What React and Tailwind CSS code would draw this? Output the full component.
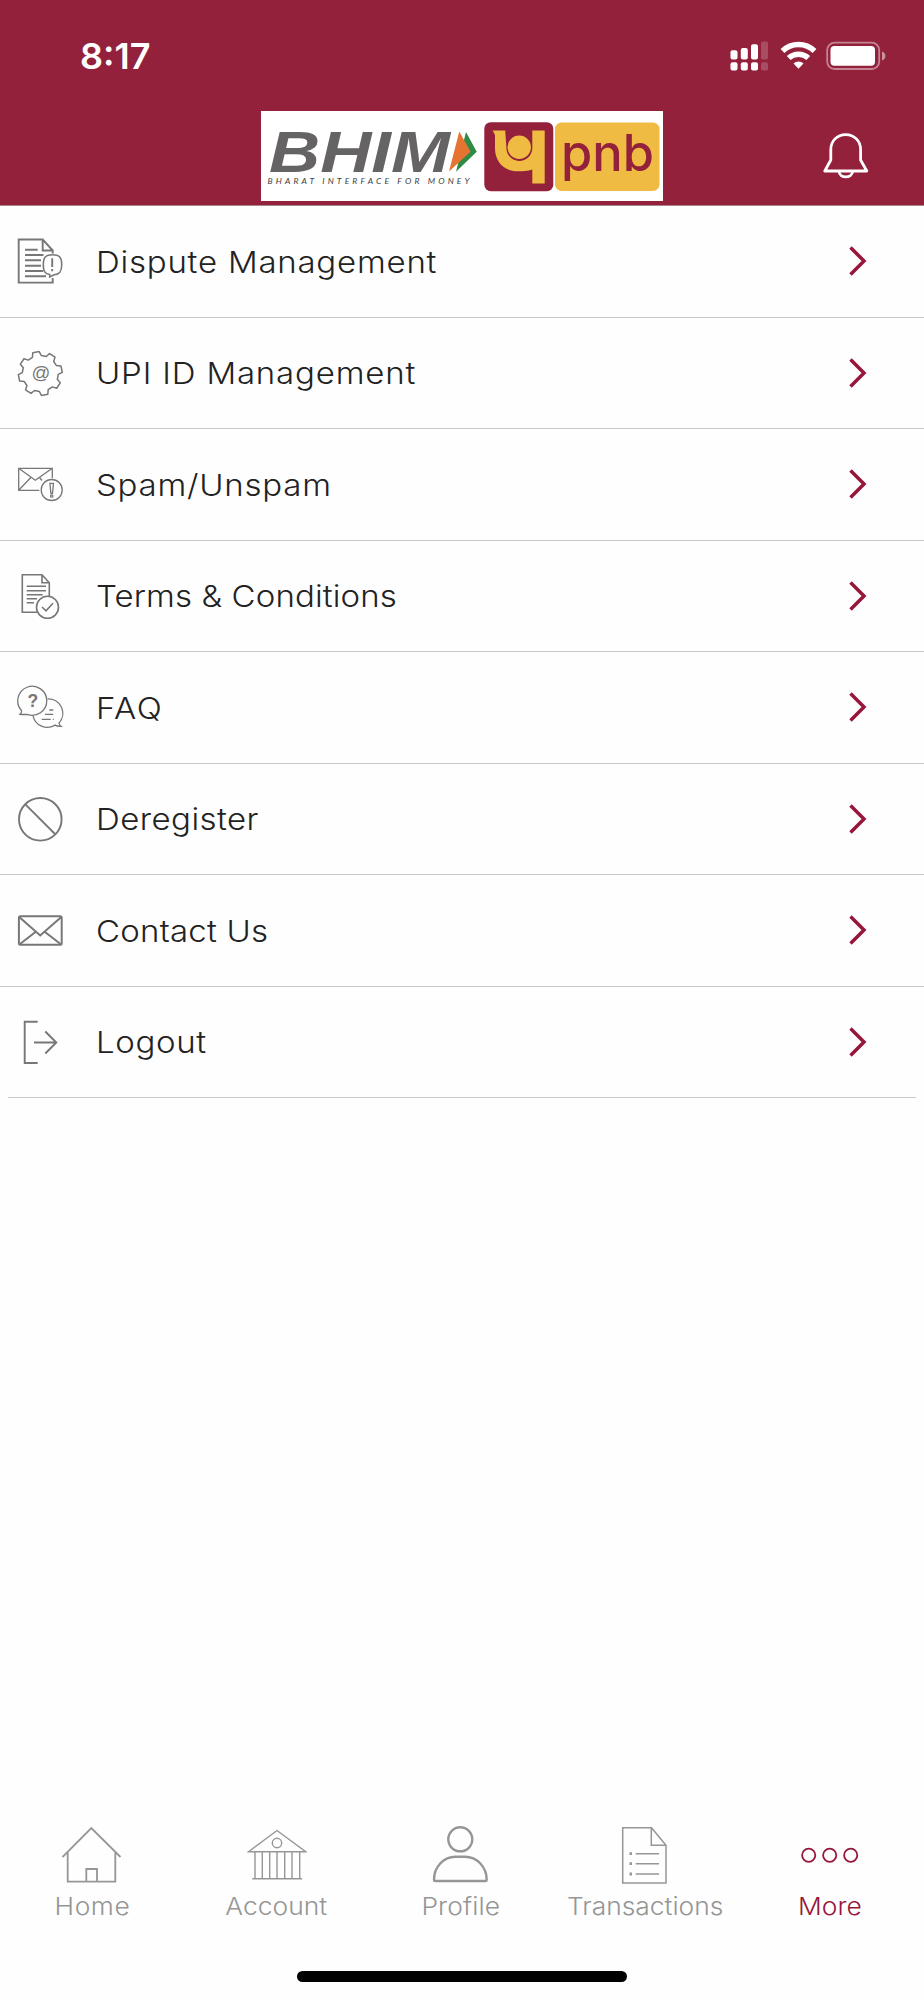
const menuItems = [
  { title: "Dispute Management", icon: DisputeIcon, tracking: "tracking-[0.7px]" },
  { title: "UPI ID Management", icon: GearIcon, tracking: "tracking-[0.75px]" },
  { title: "Spam/Unspam", icon: SpamIcon, tracking: "tracking-[0.7px]" },
  { title: "Terms & Conditions", icon: TermsIcon, tracking: "tracking-[0.1px]" },
  { title: "FAQ", icon: FaqIcon, tracking: "tracking-[1.4px]" },
  { title: "Deregister", icon: DeregisterIcon, tracking: "tracking-[0.4px]" },
  { title: "Contact Us", icon: ContactIcon, tracking: "tracking-[0.2px]" },
  { title: "Logout", icon: LogoutIcon, tracking: "tracking-[0.6px]" },
];

const tabs = [
  { title: "Home", icon: HomeIcon, tracking: "tracking-[0.5px]" },
  { title: "Account", icon: AccountIcon, tracking: "tracking-[0px]" },
  { title: "Profile", icon: ProfileIcon, tracking: "tracking-[0.1px]" },
  { title: "Transactions", icon: TransactionsIcon, tracking: "tracking-[0px]" },
  { title: "More", icon: MoreIcon, tracking: "tracking-[0px]", active: true },
];

function ListSvg({ width = 1.5, children }) {
  return (
    <svg className="h-12 w-12 shrink-0" viewBox="0 0 48 48" fill="none" stroke="#777777" strokeWidth={width}>
      {children}
    </svg>
  );
}

function DisputeIcon() {
  return (
    <ListSvg width={1.9}>
      <path d="M36.7 41v4.6h-34V2.5h24l10 11M26.7 2.5v11h10v3" />
      <path d="M9 12.7h12.7M9 18h18.5M9 23.3h16M9 28.7h16M9 34h18M9 39.3h21" />
      <path
        d="M36.5 17.7c6.5 0 9.2 2.2 9.2 10s-2.7 9.8-7.5 10L33.7 40v-2.5c-4.8-.6-6.4-3-6.4-9.8 0-7.8 2.7-10 9.2-10Z"
        fill="#fefefe"
        strokeWidth="1.6"
      />
      <path d="M36.2 21.3V30M36.2 32v2.2" />
    </ListSvg>
  );
}

// eight teeth, the first one a little left of twelve o'clock
const gearPoints = Array.from({ length: 8 }, (_, i) => {
  const base = i * 45 - 101;
  return [
    [22, base - 9],
    [22, base + 8],
    [18, base + 14],
    [18, base + 30],
  ].map(([r, deg]) => {
    const a = (deg * Math.PI) / 180;
    return `${(24.3 + r * Math.cos(a)).toFixed(2)},${(24.5 + r * Math.sin(a)).toFixed(2)}`;
  });
})
  .flat()
  .join(" ");

function GearIcon() {
  return (
    <ListSvg>
      <polygon points={gearPoints} strokeLinejoin="round" />
      <text
        x="25"
        y="29.8"
        textAnchor="middle"
        fontSize="18.5"
        fill="#777777"
        stroke="none"
        className="font-['Liberation_Sans']"
      >
        @
      </text>
    </ListSvg>
  );
}

function SpamIcon() {
  return (
    <ListSvg width={1.3}>
      <path d="M23.3 30.3H2.7v-22h33.6v10M2.7 8.3l16.6 12 17-12M2.7 30.3 15.3 17M23.5 17.5l2.5 3" />
      <circle cx="35.7" cy="30" r="10.5" />
      <path d="M33.9 23.3h3.6l-1 10h-1.6Z" />
      <circle cx="35.7" cy="36" r="1.2" />
    </ListSvg>
  );
}

function TermsIcon() {
  return (
    <ListSvg width={1.6}>
      <path d="M21.7 40.2H6.3V2.8H26l7.3 8V24M26 2.8v8h7.3" />
      <path d="M10.7 14.2H30M10.7 18.8H30M10.7 22.8h16M10.7 26.8H21M10.7 30.8H18" />
      <circle cx="31.5" cy="35.3" r="11" />
      <path d="m26 35 4 3.8 7-7.6" />
    </ListSvg>
  );
}

function FaqIcon() {
  return (
    <ListSvg width={1.3}>
      <path d="M5.5 27.5a14.5 14.5 0 1 1 5.500 3.800c-2 .2-4.500.3-7 0 1.200-1 1.700-2.300 1.500-3.800Z" />
      <path d="M31.500 15.800a14.500 14.500 0 0 1 11.500 24.200c.2 1.500.7 2.500 2 3.300-2.500.1-4.500-.3-6-1.200a14.500 14.500 0 0 1-22-9.500" />
      <path d="M33.300 27h4M29 31.300h8.300M25.700 36.300h9M36.800 36.300h1" />
      <text
        x="16.8"
        y="24.2"
        textAnchor="middle"
        fontSize="17.5"
        fill="#777777"
        stroke="none"
        className="font-['Liberation_Sans'] font-bold"
      >
        ?
      </text>
    </ListSvg>
  );
}

function DeregisterIcon() {
  return (
    <ListSvg width={1.9}>
      <circle cx="24.3" cy="24.3" r="21.3" />
      <path d="m9.4 9.4 29.6 29.6" />
    </ListSvg>
  );
}

function ContactIcon() {
  return (
    <ListSvg width={2}>
      <rect x="2.9" y="10.3" width="42.800" height="28.500" rx="1.5" />
      <path d="m3.500 11.200 20.700 18.300L45 11.200M4 38l15.500-12M44.500 38 29 26" />
    </ListSvg>
  );
}

function LogoutIcon() {
  return (
    <ListSvg width={1.9}>
      <path d="M21.7 3.700h-13v41.300h13M18 24.500h22M29.300 13.500l11 11-11 11" />
    </ListSvg>
  );
}

function TabSvg({ width = 1.800, children }) {
  return (
    <svg className="h-15 w-15" viewBox="0 0 60 60" fill="none" stroke="currentColor" strokeWidth={width}>
      {children}
    </svg>
  );
}

function HomeIcon() {
  return (
    <TabSvg>
      <path d="M.5 32 29.300 3l29.200 29M5.700 27v29.700h47.600V27M24.300 56.700V44H35v12.700" />
    </TabSvg>
  );
}

function AccountIcon() {
  return (
    <TabSvg width={1.400}>
      <path d="M1.500 26.700 30 5.500l28.700 21.200ZM5.300 53.700H55" />
      <path d="M8 27v26.500M15.300 27v26.500M22.700 27v26.500M30 27v26.500M37.700 27v26.500M45 27v26.500M52.700 27v26.500" />
      <circle cx="30" cy="18" r="4.700" />
    </TabSvg>
  );
}

function ProfileIcon() {
  return (
    <TabSvg width={2.400}>
      <circle cx="29.300" cy="14.300" r="12" />
      <path d="M24.500 31.700h9.500c12 0 21.700 10.500 21.700 23 0 .8-.4 1.300-1.200 1.300h-50.300c-.8 0-1.200-.5-1.200-1.300 0-12.500 9.500-23 21.500-23Z" />
    </TabSvg>
  );
}

function TransactionsIcon() {
  return (
    <TabSvg width={1.500}>
      <path d="M7.700 2.700h28.800L51 20.300V58H7.700ZM36.300 2.700v17.600H51" />
      <path d="M20.700 28.700H44M20.700 38.700H44M20.700 49H44" />
      <path d="M14.500 28.700H17M14.500 38.700H17M14.500 49H17" strokeWidth="2.800" />
    </TabSvg>
  );
}

function MoreIcon() {
  return (
    <TabSvg>
      <circle cx="8.700" cy="30.300" r="6.600" />
      <circle cx="29.700" cy="30.300" r="6.600" />
      <circle cx="50.700" cy="30.300" r="6.600" />
    </TabSvg>
  );
}

function StatusBar() {
  return (
    <div className="flex h-[111px] items-center justify-between pr-[38px] pl-[80px] text-white">
      <span className="font-['Inter'] text-[36px] font-semibold">8:17</span>
      <div className="flex items-center">
        <svg className="mr-3 h-[30px] w-[38px]" viewBox="0 0 38 30" fill="currentColor">
          <rect x=".5" y="9.300" width="7" height="9.200" rx="2" />
          <rect x="10.800" y="7" width="7" height="11.500" rx="2" />
          <rect x="21" y="3.200" width="7" height="15.300" rx="2" />
          <rect x="31" y=".5" width="7" height="18" rx="2" opacity=".2" />
          <rect x=".5" y="21.300" width="7" height="8.200" rx="2" />
          <rect x="10.800" y="21.300" width="7" height="8.200" rx="2" />
          <rect x="21" y="21.300" width="7" height="8.200" rx="2" />
          <rect x="31" y="21.300" width="7" height="8.200" rx="2" opacity=".2" />
        </svg>
        <svg className="mr-[9px] h-[30px] w-[37px]" viewBox="0 0 37 30" fill="none" stroke="currentColor" strokeWidth="5.500">
          <path d="M2.500 10a23 23 0 0 1 32 0" />
          <path d="M8.700 17a14.500 14.500 0 0 1 19.600 0" />
          <path d="m18.500 27.800-5-5.300a7 7 0 0 1 10 0Z" fill="currentColor" stroke="none" />
        </svg>
        <svg className="h-[30px] w-[60px]" viewBox="0 0 60 30" fill="currentColor">
          <rect x="1.200" y="1.700" width="52" height="26.300" rx="7.500" fill="none" stroke="white" strokeWidth="1.800" opacity=".45" />
          <rect x="4.500" y="5" width="44.500" height="19.800" rx="4" />
          <path d="M56 10.500c4.500 1.500 4.500 7.500 0 9Z" opacity=".5" />
        </svg>
      </div>
    </div>
  );
}

function Logo() {
  return (
    <svg className="h-[90px] w-[402px] bg-white" viewBox="0 0 402 90">
      <text
        x="8"
        y="60.500"
        fontSize="57"
        textLength="181"
        lengthAdjust="spacingAndGlyphs"
        fill="#656364"
        className="font-['Liberation_Sans'] font-bold italic"
      >
        BHIM
      </text>
      <path d="m205 21 10.700 19.700L195 60.700Z" fill="#2f8a45" />
      <path d="M198.300 20.500 209.500 40.700 188 60.500Z" fill="#e57433" />
      <text x="6.500" y="72.500" fontSize="8.500" textLength="202" fill="#3c3c3c" className="font-['Lato'] italic">
        BHARAT INTERFACE FOR MONEY
      </text>
      <rect x="223.300" y="11.200" width="69" height="69" rx="6.500" fill="#93213b" />
      <path
        d="M231.700 19.500h12.500l1.200 17a12.900 12.900 0 0 0 25.900 1V19.500h12.400v53h-12.400V58.500c-4 1.600-10 1.800-15 1.800-13.500 0-22.300-9.800-22.300-23V24Z"
        fill="#efbb43"
      />
      <circle cx="258.200" cy="36.300" r="11.700" fill="#efbb43" />
      <rect x="294" y="11.500" width="104.500" height="68.500" rx="6.500" fill="#efbb43" />
      <text
        x="300"
        y="60"
        fontSize="51"
        textLength="93"
        lengthAdjust="spacingAndGlyphs"
        fill="#93213b"
        className="font-['Inter'] font-medium"
      >
        pnb
      </text>
    </svg>
  );
}

function Header() {
  return (
    <header className="h-[206px] border-b border-[#a9868e] bg-[#93213b]">
      <StatusBar />
      <div className="grid grid-cols-[1fr_auto_1fr] items-center">
        <span />
        <Logo />
        <button className="justify-self-end pr-[55px] text-white">
          <svg className="h-12 w-[46px]" viewBox="0 0 46 48" fill="none" stroke="currentColor" strokeWidth="2.800" strokeLinejoin="round">
            <path d="M22.700 2.600C14 2.600 7.800 9 7.800 17.500V28L1.800 39h42L37.600 28V17.500C37.600 9 31.400 2.600 22.700 2.600Z" />
            <path d="M16 39.500c.5 7.200 13 7.200 13.600 0" />
          </svg>
        </button>
      </div>
    </header>
  );
}

export default function App() {
  return (
    <div className="flex h-[2000px] w-[924px] flex-col overflow-hidden bg-[#fefefe] font-['Inter',sans-serif]">
      <Header />
      <ul className="grid h-[892px] grid-rows-8">
        {menuItems.map(({ title, icon: Icon, tracking }) => (
          <li
            key={title}
            className="flex items-center border-b border-[#c9c9c9] pr-[56px] pl-4 last:mx-2 last:pr-[48px] last:pl-2"
          >
            <Icon />
            <span
              className={`mt-0.5 mr-auto ml-8 origin-left scale-x-110 text-[30px] font-light text-[#222222] ${tracking}`}
            >
              {title}
            </span>
            <svg className="h-8 w-5" viewBox="0 0 20 32" fill="none" stroke="#97173b" strokeWidth="3.500">
              <path d="m2.500 2.500 13.500 13.500L2.500 29.500" />
            </svg>
          </li>
        ))}
      </ul>
      <nav className="mt-auto grid w-[922px] grid-cols-5">
        {tabs.map(({ title, icon: Icon, tracking, active }) => (
          <a
            key={title}
            className={`flex flex-col items-center ${active ? "text-[#97173b]" : "text-[#969696]"}`}
          >
            <Icon />
            <span className={`mt-[6px] scale-x-110 text-[24px] leading-8 font-light ${tracking}`}>{title}</span>
          </a>
        ))}
      </nav>
      <div className="mx-auto mt-12 mb-[18px] h-[11px] w-[330px] shrink-0 rounded-full bg-black" />
    </div>
  );
}
